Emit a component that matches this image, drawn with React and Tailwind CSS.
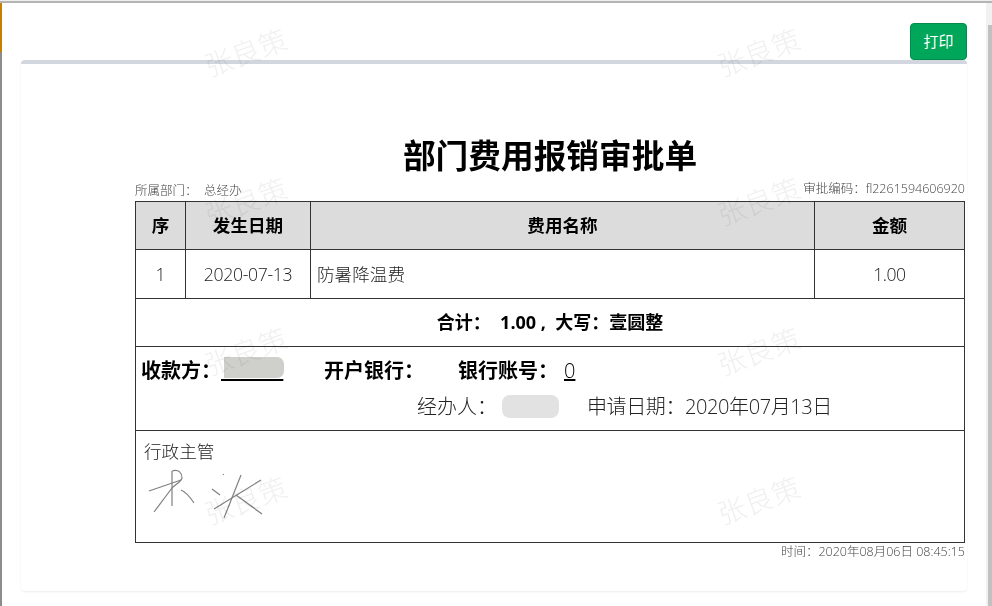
const font = { fontFamily: '"Open Sans","Noto Sans CJK SC",sans-serif' };

function Watermark({ className }) {
  return (
    <div className={"absolute pointer-events-none mix-blend-multiply text-[28px] leading-none tracking-[0.5px] font-light text-[#f0f0f0] -rotate-[20deg] whitespace-nowrap " + className}>张良策</div>
  );
}

function Signature() {
  return (
    <svg className="block ml-[11px] mt-[3px]" width="125" height="58" viewBox="148 468 125 58" fill="none" stroke="#808080" strokeWidth="1.2">
      <path d="M150 493L182 482" />
      <path d="M173 473L173 508" />
      <path d="M173 490L155 514" />
      <path d="M173 473C180 471 183 475 183 480C182 484 177 486 173 490" />
      <path d="M182 492C187 494 191 499 195 505" />
      <path d="M213 491L221 497" />
      <path d="M215 511L262 482" />
      <path d="M242 477L225 520" />
      <path d="M237 497L263 516" />
      <path d="M224 476L224.8 477" />
    </svg>
  );
}

const cell = "border border-[#333] p-0 align-middle";

export default function App() {
  return (
    <div className="relative w-[992px] h-[606px] overflow-hidden bg-white flex flex-col text-[#222]" style={font}>
      <div className="h-[3px] shrink-0 border-t border-[#eee] border-b-2 border-b-[#b4b4b4] bg-white"></div>
      <div className="flex flex-1 min-h-0">
        <div className="w-[2px] shrink-0 flex flex-col bg-[#8c8c8c]">
          <div className="h-[49px] bg-[#c77f00]"></div>
        </div>
        <div className="flex-1 min-w-0 px-[19px] pt-[20px] flex flex-col items-stretch relative">
          <div className="flex justify-end h-[37px] relative z-10">
            <button className="w-[57px] h-[37px] rounded-[4px] bg-[#00a65a] border border-[#008d4c] text-white text-[15px]">打印</button>
          </div>
          <div className="h-[531px] rounded-[4px] border-t-[4px] border-t-[#d2d6de] shadow-[0_1px_2px_rgba(0,0,0,0.08)] bg-white pl-[114px] pr-[2px]">
            <h1 className="text-[32.7px] leading-[44px] font-bold text-black text-center mt-[70px]">部门费用报销审批单</h1>
            <div className="flex justify-between items-end text-[12.5px] leading-[18px] font-light text-[#444] mt-[2px] mb-[1px]">
              <span>所属部门：&nbsp;&nbsp;总经办</span>
              <span className="mb-[2px]">审批编码：fl2261594606920</span>
            </div>
            <table className="w-[829px] table-fixed border-collapse text-[17.6px] text-[#222]">
              <colgroup>
                <col className="w-[50px]" />
                <col className="w-[125px]" />
                <col className="w-[504px]" />
                <col className="w-[150px]" />
              </colgroup>
              <tbody>
                <tr className="h-[48px] bg-[#dcdcdc] text-black font-bold text-center">
                  <td className={cell}>序</td>
                  <td className={cell}>发生日期</td>
                  <td className={cell}>费用名称</td>
                  <td className={cell}>金额</td>
                </tr>
                <tr className="h-[49px] font-light">
                  <td className={cell + " text-center"}>1</td>
                  <td className={cell + " text-center tracking-[-0.3px]"}>2020-07-13</td>
                  <td className={cell + " pl-[6px]"}>防暑降温费</td>
                  <td className={cell + " text-center tracking-[-0.5px]"}>1.00</td>
                </tr>
                <tr className="h-[48px]">
                  <td colSpan={4} className={cell + " text-center text-[18px] font-bold text-black"}>合计：&nbsp;&nbsp;1.00&nbsp;,&nbsp;&nbsp;大写：壹圆整</td>
                </tr>
                <tr className="h-[84px]">
                  <td colSpan={4} className={cell + " align-top"}>
                    <div className="flex items-center h-[48px] pl-[5px] text-[20px] font-bold text-black">
                      <span>收款方：</span>
                      <span className="relative underline w-[61px] mr-[42px] whitespace-pre">
                        {"            "}
                        <span className="absolute left-[3px] top-[1px] w-[60px] h-[21px] rounded-r-[7px] bg-[#cfcfcc]"></span>
                      </span>
                      <span>开户银行：</span>
                      <span className="w-[34px]"></span>
                      <span>银行账号：</span>
                      <span className="font-light underline ml-[6px]">0</span>
                    </div>
                    <div className="flex h-[24px] items-center pl-[281px] text-[20px] font-light">
                      <span>经办人：</span>
                      <span className="relative w-[90px] h-full">
                        <span className="absolute left-[5px] top-[0px] w-[57px] h-[23px] rounded-[8px] bg-[#e2e2e2]"></span>
                      </span>
                      <span className="tracking-[-0.4px]">申请日期：2020年07月13日</span>
                    </div>
                  </td>
                </tr>
                <tr className="h-[112px]">
                  <td colSpan={4} className={cell + " align-top"}>
                    <div className="pl-[8px] pt-[8px] text-[17.6px] leading-[24px] font-light">行政主管</div>
                    <Signature />
                  </td>
                </tr>
              </tbody>
            </table>
            <div className="text-right text-[12.5px] leading-[16px] font-light text-[#444] mt-[1px]">时间：2020年08月06日 08:45:15</div>
          </div>
        </div>
        <div className="w-[6px] shrink-0 flex flex-col bg-[#f1f1f1]">
          <div className="h-[22px]"></div>
          <div className="flex-1 ml-[2px] bg-[#c1c1c1]"></div>
        </div>
      </div>
      <Watermark className="left-[203px] top-[38px]" />
      <Watermark className="left-[716px] top-[38px]" />
      <Watermark className="left-[203px] top-[187px]" />
      <Watermark className="left-[716px] top-[187px]" />
      <Watermark className="left-[203px] top-[337px]" />
      <Watermark className="left-[716px] top-[337px]" />
      <Watermark className="left-[203px] top-[486px]" />
      <Watermark className="left-[716px] top-[486px]" />
    </div>
  );
}
